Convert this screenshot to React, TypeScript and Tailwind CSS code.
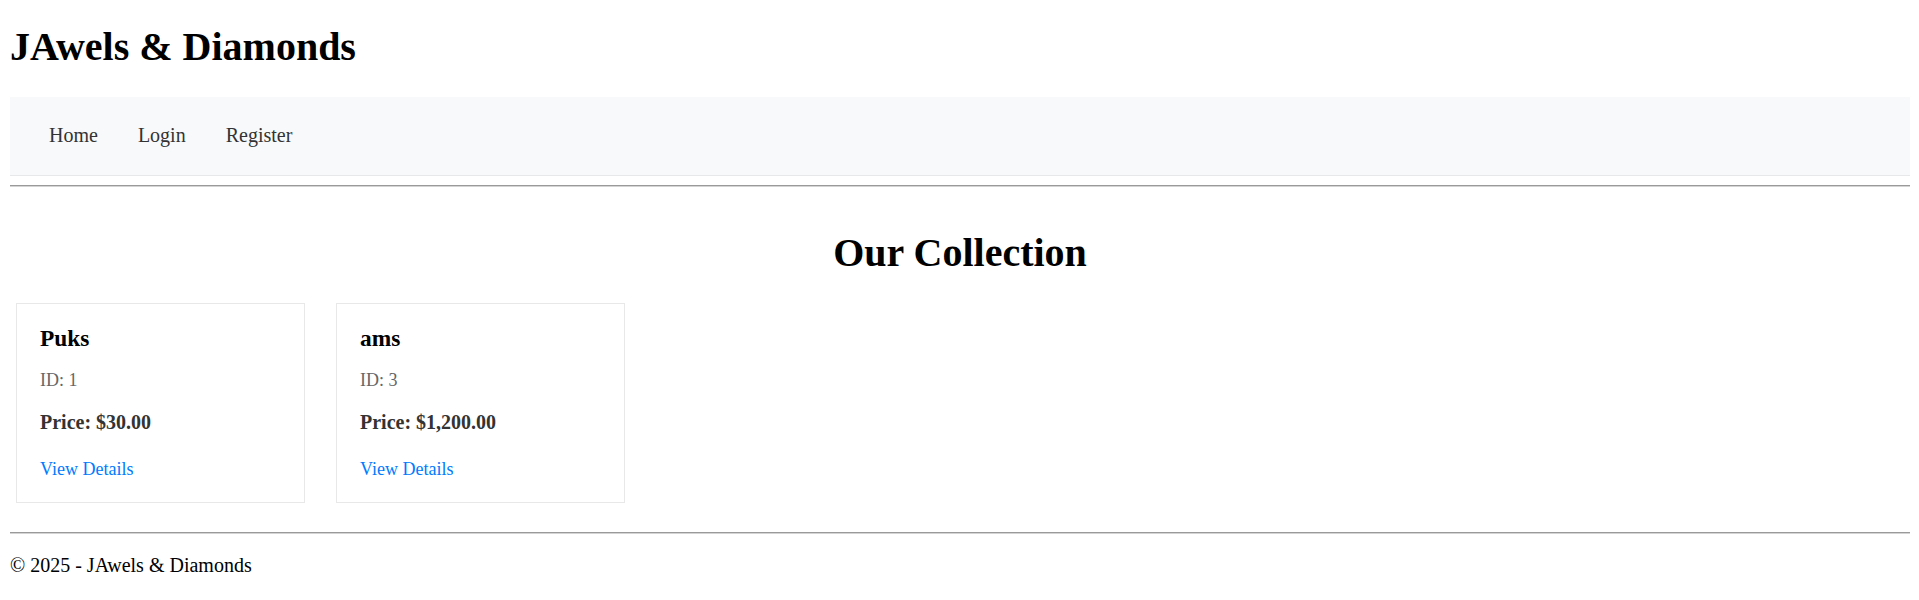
const products = [
  { id: 1, name: 'Puks', price: '$30.00' },
  { id: 3, name: 'ams', price: '$1,200.00' },
];

const navLinks = ['Home', 'Login', 'Register'];

const Rule = () => <div className="h-[2px] border-t border-b border-t-[#9a9a9a] border-b-[#d4d4d4]" />;

const ProductCard = ({ id, name, price }: { id: number; name: string; price: string }) => (
  <div className="w-[289px] border border-[#e8e8e8] pt-[20px] pb-[22px] px-[23px]">
    <h3 className="text-[23.4px] leading-[28px] font-bold text-black">{name}</h3>
    <p className="mt-[17px] text-[18px] leading-[22px] text-[#666]">ID: {id}</p>
    <p className="mt-[19px] text-[20px] leading-[24px] font-bold text-[#333]">Price: {price}</p>
    <a href="#" className="block mt-[24px] text-[18px] leading-[22px] text-[#007bff]">
      View Details
    </a>
  </div>
);

export default function App() {
  return (
    <div className="min-h-screen bg-white pt-[24px] pl-[10px] pr-[9px] font-['Liberation_Serif',serif] text-black">
      <header>
        <h1 className="text-[40px] leading-[46px] font-bold">JAwels &amp; Diamonds</h1>
        <nav className="mt-[27px] flex bg-[#f8f9fa] border-b border-[#e6e8ea] pl-[19px] pt-[27px] pb-[28px]">
          {navLinks.map((link) => (
            <a key={link} href="#" className="px-5 text-[20px] leading-[23px] text-[#333]">
              {link}
            </a>
          ))}
        </nav>
      </header>

      <div className="mt-[9px]">
        <Rule />
      </div>

      <main>
        <h2 className="mt-[43px] text-center text-[40px] leading-[46px] font-bold">Our Collection</h2>
        <div className="mt-[27px] flex gap-[31px] pl-[6px]">
          {products.map((p) => (
            <ProductCard key={p.id} {...p} />
          ))}
        </div>
      </main>

      <footer className="mt-[29px]">
        <Rule />
        <p className="mt-[20px] text-[20px] leading-[23px]">© 2025 - JAwels &amp; Diamonds</p>
      </footer>
    </div>
  );
}
